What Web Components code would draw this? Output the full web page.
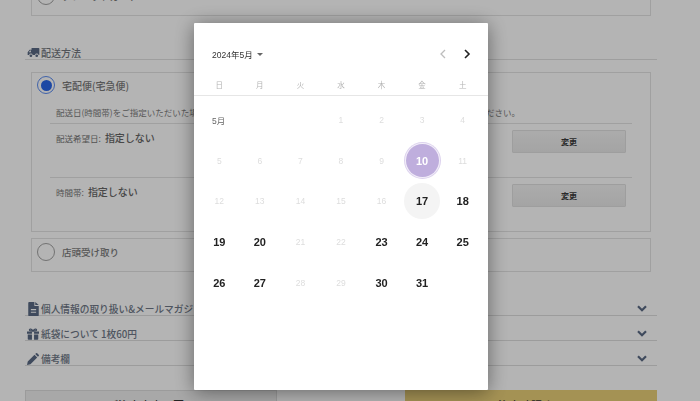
<!DOCTYPE html>
<html lang="ja">
<head>
<meta charset="utf-8">
<title>配送方法</title>
<style>
  html, body { margin: 0; height: 401px; overflow: hidden; background: #fff; }
  body { font-family: "Noto Sans CJK JP", "Noto Sans", sans-serif; }
</style>
</head>
<body>

<checkout-page>
  <shipping-option label="クレジットカード" slot="top"></shipping-option>

  <section-heading icon="truck">配送方法</section-heading>

  <shipping-option label="宅配便(宅急便)" checked tall>
    <p class="notice">配送日(時間帯)をご指定いただいた場合は、お届けまでに少しお時間をいただく場合がございます。予めご了承ください。</p>
    <date-row label="配送希望日:" value="指定しない" size="54"></date-row>
    <date-row label="時間帯:" value="指定しない" size="54"></date-row>
  </shipping-option>

  <shipping-option label="店頭受け取り" class="pickup"></shipping-option>

  <accordion-row icon="file" class="first">個人情報の取り扱い&amp;メールマガジンについて</accordion-row>
  <accordion-row icon="gift">紙袋について 1枚60円</accordion-row>
  <accordion-row icon="pencil">備考欄</accordion-row>

  <checkout-actions></checkout-actions>
</checkout-page>

<calendar-dialog></calendar-dialog>

<script>
  const ICONS = {
    truck: '<svg viewBox="0 0 20 16" width="13" height="11"><path fill="currentColor" d="M7 1h11a1 1 0 0 1 1 1v10h-1.2a2.8 2.8 0 0 0-5.5 0H8.7a2.8 2.8 0 0 0-5.5 0H1V7.5L4 3.6h3zM2.8 7.6H6V5H4.8z"/><circle fill="currentColor" cx="6" cy="13" r="2.1"/><circle fill="currentColor" cx="15" cy="13" r="2.1"/></svg>',
    file: '<svg viewBox="0 0 12 16" width="11" height="14"><path fill="currentColor" d="M0 1a1 1 0 0 1 1-1h6v4.5h5V15a1 1 0 0 1-1 1H1a1 1 0 0 1-1-1zM8 0l4 3.5H8zM3 8v1.3h6V8zm0 3v1.3h6V11z"/></svg>',
    gift: '<svg viewBox="0 0 16 15" width="12" height="12"><path fill="currentColor" d="M0 4h6.6v3H0zM9.4 4H16v3H9.4zM1 8h5.6v7H2a1 1 0 0 1-1-1zM9.4 8H15v6a1 1 0 0 1-1 1H9.4z"/><path fill="none" stroke="currentColor" stroke-width="1.5" d="M8 3.6C6.5.6 3.2.2 3.2 2.2 3.2 3.4 5.5 3.6 8 3.6 10.5 3.6 12.8 3.4 12.8 2.2 12.8.2 9.5.6 8 3.6z"/></svg>',
    pencil: '<svg viewBox="0 0 16 16" width="12" height="12"><path fill="currentColor" d="M0 16l1-4.6L10 2.4 13.6 6 4.6 15zM11 1.4l1-1a1.2 1.2 0 0 1 1.6 0l2 2a1.2 1.2 0 0 1 0 1.6l-1 1z"/></svg>'
  };

  class RadioMark extends HTMLElement {
    constructor() {
      super();
      this.attachShadow({ mode: 'open' }).innerHTML = `
        <style>
          :host { display: block; width: 18px; height: 18px; box-sizing: border-box; border: 1px solid #a2a2a2; border-radius: 50%; background: #fff; flex: none; position: relative; }
          :host([checked]) { border-color: #5c8cf0; }
          :host([checked])::after { content: ""; position: absolute; inset: 2.5px; border-radius: 50%; background: #2a66e8; }
        </style>`;
    }
  }
  customElements.define('radio-mark', RadioMark);

  class ShippingOption extends HTMLElement {
    constructor() {
      super();
      this.attachShadow({ mode: 'open' });
    }

    connectedCallback() {
      const checked = this.hasAttribute('checked') ? 'checked' : '';
      this.shadowRoot.innerHTML = `
        <style>
          :host { display: block; box-sizing: border-box; margin: 0 6px; height: 34px; border: 1px solid #e3e3e3; background: #fff; color: #7b7b7b; }
          :host([tall]) { height: 160px; margin-top: 12px; }
          :host(.pickup) { margin-top: 6px; }
          .head { display: flex; align-items: center; gap: 7px; box-sizing: border-box; height: 26px; padding-left: 5px; font-size: 9.5px; font-weight: 500; }
          :host([tall]) .head { height: 24px; font-size: 10px; }
          .body { padding: 0 18px; }
          ::slotted(p) { margin: 0; height: 26px; padding: 9px 6px 0; box-sizing: border-box; font-size: 8.5px; line-height: 13px; white-space: nowrap; overflow: hidden; color: #7b7b7b; }
        </style>
        <div class="head"><radio-mark ${checked}></radio-mark><span>${this.getAttribute('label')}</span></div>
        <div class="body"><slot></slot></div>`;
    }
  }
  customElements.define('shipping-option', ShippingOption);

  class DateRow extends HTMLElement {
    constructor() {
      super();
      this.attachShadow({ mode: 'open' });
    }

    connectedCallback() {
      this.shadowRoot.innerHTML = `
        <style>
          :host { display: flex; justify-content: space-between; align-items: flex-start; box-sizing: border-box; height: ${this.getAttribute('size')}px; padding: 6px 6px 0; border-top: 1px solid #e3e3e3; color: #757575; }
          .field { display: flex; align-items: baseline; gap: 4px; margin-top: -1px; font-size: 8.5px; font-weight: 400; line-height: 18px; }
          b { font-size: 10px; font-weight: 500; color: #666; }
          button { width: 114px; height: 23px; padding: 0; border: 1px solid #e0e0e0; border-radius: 1px; background: linear-gradient(#f3f3f3, #e9e9e9); color: #3a3a3a; font: 700 8px "Noto Sans CJK JP", sans-serif; }
        </style>
        <div class="field"><span>${this.getAttribute('label')}</span><b>${this.getAttribute('value')}</b></div>
        <button type="button">変更</button>`;
    }
  }
  customElements.define('date-row', DateRow);

  class SectionHeading extends HTMLElement {
    constructor() {
      super();
      this.attachShadow({ mode: 'open' });
    }

    connectedCallback() {
      this.shadowRoot.innerHTML = `
        <style>
          :host { display: flex; align-items: center; gap: 1px; box-sizing: border-box; height: 15px; margin-top: 29px; padding: 1px 0 0 2px; border-bottom: 1px solid #e0e0e0; color: #737880; font-size: 10px; font-weight: 500; }
          span { display: flex; color: #5a6a84; }
        </style>
        <span>${ICONS[this.getAttribute('icon')]}</span><slot></slot>`;
    }
  }
  customElements.define('section-heading', SectionHeading);

  class AccordionRow extends HTMLElement {
    constructor() {
      super();
      this.attachShadow({ mode: 'open' });
    }

    connectedCallback() {
      this.shadowRoot.innerHTML = `
        <style>
          :host { display: flex; align-items: center; gap: 2px; box-sizing: border-box; height: 25px; padding: 11px 10px 0 2px; border-bottom: 1px solid #dedede; color: #6f7887; font-size: 9.7px; font-weight: 500; }
          :host(.first) { margin-top: 19px; }
          .icon { display: flex; width: 12px; justify-content: center; color: #5a6a84; }
          .label { flex: 1; white-space: nowrap; }
          svg.chev { color: #5a6a84; }
        </style>
        <span class="icon">${ICONS[this.getAttribute('icon')]}</span>
        <span class="label"><slot></slot></span>
        <svg class="chev" viewBox="0 0 10 7" width="10" height="7"><path fill="none" stroke="currentColor" stroke-width="2.2" d="M1 1.2l4 4 4-4"/></svg>`;
    }
  }
  customElements.define('accordion-row', AccordionRow);

  class CheckoutActions extends HTMLElement {
    constructor() {
      super();
      this.attachShadow({ mode: 'open' }).innerHTML = `
        <style>
          :host { display: flex; justify-content: space-between; margin-top: 24px; }
          button { width: 252px; height: 30px; padding: 0; border: 1px solid #dcdcdc; background: #eee; color: #333; font: 500 11px "Noto Sans CJK JP", sans-serif; }
          .go { border: 0; background: #e9cf78; }
        </style>
        <button type="button">ご注文内容へ戻る</button>
        <button type="button" class="go">注文確認する</button>`;
    }
  }
  customElements.define('checkout-actions', CheckoutActions);

  class CheckoutPage extends HTMLElement {
    constructor() {
      super();
      this.attachShadow({ mode: 'open' }).innerHTML = `
        <style>
          :host { display: block; width: 632px; margin: -18px 0 0 25px; }
        </style>
        <slot name="top"></slot><slot></slot>`;
    }
  }
  customElements.define('checkout-page', CheckoutPage);

  class CalendarDialog extends HTMLElement {
    constructor() {
      super();
      this.attachShadow({ mode: 'open' });
    }

    connectedCallback() {
      const weekdays = ['日', '月', '火', '水', '木', '金', '土'];
      const enabled = [17, 18, 19, 20, 23, 24, 25, 26, 27, 30, 31];
      let cells = '<div class="month">5月</div><i></i><i></i>';
      for (let day = 1; day <= 31; day++) {
        let cls = enabled.includes(day) ? 'on' : 'off';
        if (day === 10) cls = 'selected';
        if (day === 17) cls = 'on today';
        cells += `<div class="day ${cls}"><span>${day}</span></div>`;
      }
      this.shadowRoot.innerHTML = `
        <style>
          :host { position: fixed; inset: 0; display: block; background: rgba(0, 0, 0, .295); font-family: "Liberation Sans", "Noto Sans CJK JP", sans-serif; }
          .dialog { box-sizing: border-box; width: 294px; height: 367px; margin: 23px 0 0 194px; background: #fff; border-radius: 1px; box-shadow: 0 2px 20px rgba(0, 0, 0, .45); }
          header { display: flex; align-items: center; height: 20px; padding: 21px 16px 0 18px; color: #333; font-size: 8.5px; }
          .caret { width: 0; height: 0; margin: 1px 0 0 4px; border: 3px solid transparent; border-top: 3.5px solid #666; border-bottom: 0; }
          nav { display: flex; gap: 14px; margin-left: auto; }
          nav svg { display: block; }
          .weeks { display: grid; grid-template-columns: repeat(7, 40.57px); height: 19px; margin-top: 12px; padding-left: 5px; border-bottom: 1px solid #e6e6e6; color: #b4b4b4; font-size: 7.5px; line-height: 19px; text-align: center; }
          .days { display: grid; grid-template-columns: repeat(7, 40.57px); grid-auto-rows: 40.6px; padding: 4px 0 0 5px; }
          .month { display: flex; align-items: center; padding-left: 13px; color: #666; font-size: 8.5px; }
          .day { display: flex; align-items: center; justify-content: center; }
          .day span { display: flex; align-items: center; justify-content: center; width: 36px; height: 36px; border-radius: 50%; box-sizing: border-box; }
          .off { color: #ddd; font-size: 8.5px; }
          .on { color: #222; font-size: 11px; font-weight: 700; }
          .today span { background: #f4f4f4; }
          .selected { color: #fff; font-size: 11px; font-weight: 700; }
          .selected span { width: 33px; height: 33px; background: #bfaedd; box-shadow: 0 0 0 1px #f3eff9, 0 0 0 2px #ddd3ee; }
        </style>
        <div class="dialog" role="dialog">
          <header>
            <span>2024年5月</span><span class="caret"></span>
            <nav>
              <svg viewBox="0 0 10 12" width="10" height="12"><path fill="none" stroke="#bdbdbd" stroke-width="1.3" d="M7 2L3 6l4 4"/></svg>
              <svg viewBox="0 0 10 12" width="10" height="12"><path fill="none" stroke="#222" stroke-width="1.6" d="M3 2l4 4-4 4"/></svg>
            </nav>
          </header>
          <div class="weeks">${weekdays.map((w) => `<span>${w}</span>`).join('')}</div>
          <div class="days">${cells}</div>
        </div>`;
    }
  }
  customElements.define('calendar-dialog', CalendarDialog);
</script>
</body>
</html>
